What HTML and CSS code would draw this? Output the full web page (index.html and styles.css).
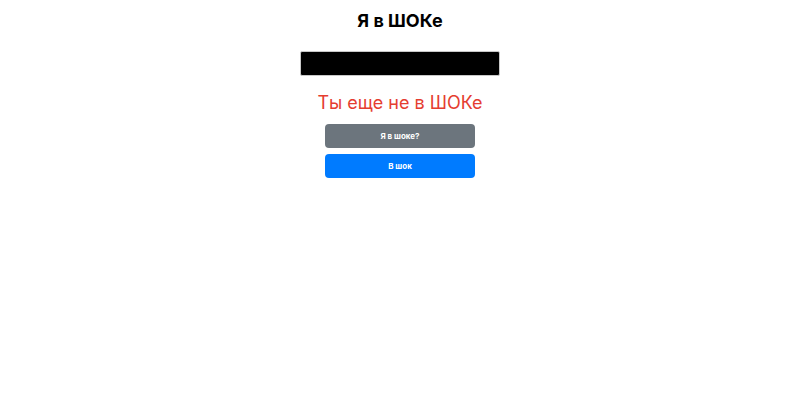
FILE: index.html
```html
<!DOCTYPE html>
<html lang="ru">
<head>
<meta charset="utf-8">
<link rel="stylesheet" href="styles.css">
</head>
<body>
<main class="app">
  <h1 class="title">Я в ШОКе</h1>
  <input class="field" type="text">
  <p class="status">Ты еще не в ШОКе</p>
  <button class="btn btn-gray">Я в шоке?</button>
  <button class="btn btn-blue">В шок</button>
</main>
</body>
</html>
```
FILE: styles.css
```css
html, body { margin: 0; padding: 0; background: #fff; }
body { font-family: Inter, "Noto Sans", sans-serif; }
.app {
  display: flex;
  flex-direction: column;
  align-items: center;
  padding-top: 10px;
}
.title {
  margin: 0;
  font-size: 18px;
  font-weight: 700;
  line-height: 22px;
  color: #000;
}
.field {
  margin-top: 19px;
  width: 200px;
  height: 25px;
  box-sizing: border-box;
  background: #000;
  border: 1px solid #c8c8c8;
  border-radius: 2px;
  padding: 0;
}
.status {
  margin: 14px 0 0;
  font-size: 18px;
  line-height: 26px;
  color: #e53d30;
}
.btn {
  width: 150px;
  height: 24px;
  border: none;
  border-radius: 4px;
  color: #fff;
  font-family: Inter, "Noto Sans", sans-serif;
  font-size: 8px;
  font-weight: 700;
  padding: 0;
  cursor: pointer;
}
.btn-gray { margin-top: 8px; background: #6c757d; }
.btn-blue { margin-top: 6px; background: #007bff; }
```
